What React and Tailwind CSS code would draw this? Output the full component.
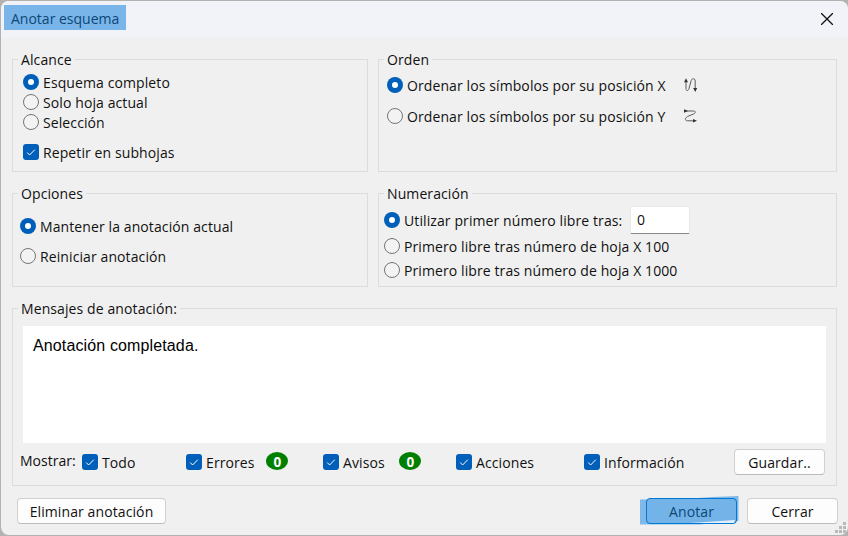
import React from "react";

function Group({ title, className, bodyClassName, children }) {
  return (
    <fieldset className={`min-w-0 border border-[#dcdcdc] ${className}`}>
      <legend className="ml-[5px] h-[21px] px-[3px] leading-[21px]">{title}</legend>
      <div className={`flow-root ${bodyClassName}`}>{children}</div>
    </fieldset>
  );
}

function Radio({ label, checked, className = "" }) {
  return (
    <div className={`flex items-center whitespace-nowrap ${className}`}>
      {checked ? (
        <span className="mr-1 flex size-4 shrink-0 items-center justify-center rounded-full bg-[#005fb8]">
          <span className="size-[6px] rounded-full bg-white" />
        </span>
      ) : (
        <span className="mr-1 size-4 shrink-0 rounded-full border border-[#757575] bg-[#f3f3f3]" />
      )}
      <span className="pt-px leading-[19px]">{label}</span>
    </div>
  );
}

function Check({ label, className = "" }) {
  return (
    <div className={`flex shrink-0 items-center whitespace-nowrap ${className}`}>
      <span className="mr-1 flex size-4 shrink-0 items-center justify-center rounded-[3px] bg-[#005fb8]">
        <svg width="16" height="16" viewBox="0 0 16 16" fill="none" stroke="#fff" strokeWidth="1">
          <path d="M4.2 8.5 6.6 11l5.2-5.3" />
        </svg>
      </span>
      <span className="pt-px leading-[19px]">{label}</span>
    </div>
  );
}

function Badge() {
  return (
    <span className="mr-[35px] mb-[2px] flex h-[18px] w-[22px] shrink-0 items-center justify-center rounded-[50%] bg-[#008000] text-[15px] leading-[18px] font-bold text-white">
      <span className="scale-x-90">0</span>
    </span>
  );
}

function Button({ className, children }) {
  return (
    <button className={`h-[26px] shrink-0 rounded-[4px] border border-[#d0d0d0] border-b-[#bcbcbc] bg-[#fdfdfd] pt-px leading-[23px] ${className}`}>
      {children}
    </button>
  );
}

function OrderIcon({ horizontal }) {
  return (
    <svg width="16" height="16" viewBox="0 0 16 16" className="ml-[17px] shrink-0" fill="none" stroke="#5a5a5a" strokeWidth="1">
      {horizontal ? (
        <>
          <path d="M2 3h8.500c2.500 0 2.500 2 0 3L4.500 8.500C1.500 10.500 2 12.800 4.500 12.800h7" />
          <path d="M1 1.200v3.600L5 3zM10 11v3.600l4-1.800z" fill="#333" stroke="none" />
        </>
      ) : (
        <>
          <path d="M3 3v8.500c0 2.800 2.200 2.800 3 0l2.200-8c.8-2.500 4-2.500 4 .5v8" />
          <path d="M1 5.200h4L3 1.200zM10.200 11h4l-2 4z" fill="#333" stroke="none" />
        </>
      )}
    </svg>
  );
}

export default function App() {
  return (
    <div className="h-[536px] w-[848px] overflow-hidden bg-[#b4b2b1] pt-px pl-px font-['Open_Sans','Noto_Sans',sans-serif] text-[14px] leading-5 tracking-[0.1px] text-[#111]">
      <div className="relative flex h-[534px] w-[847px] flex-col overflow-hidden rounded-[8px] bg-[#f0f0f0]">
        <header className="flex h-9 shrink-0 items-center justify-between bg-[#f2f3f9] pr-[15px] pl-[3px]">
          <div className="mb-[3px] h-[25px] w-[122px] bg-[#79b5e9] pl-[7px] leading-[28px] tracking-normal text-[#0c4777]">
            Anotar esquema
          </div>
          <svg width="12" height="12" viewBox="0 0 12 12" stroke="#111" strokeWidth="1.3">
            <path d="M0 0 12 12M12 0 0 12" />
          </svg>
        </header>

        <main className="px-[11px] pt-3">
          <div className="flex gap-[10px]">
            <Group title="Alcance" className="h-[123px] w-[356px]" bodyClassName="pl-[10px] pt-[2px]">
              <Radio checked label="Esquema completo" />
              <Radio label="Solo hoja actual" />
              <Radio label="Selección" />
              <Check label="Repetir en subhojas" className="mt-[10px]" />
            </Group>
            <Group title="Orden" className="h-[123px] w-[459px]" bodyClassName="pl-2 pt-[5px]">
              <div className="flex items-center">
                <Radio checked label="Ordenar los símbolos por su posición X" className="w-[279px]" />
                <OrderIcon />
              </div>
              <div className="mt-[11px] flex items-center">
                <Radio label="Ordenar los símbolos por su posición Y" className="w-[279px]" />
                <OrderIcon horizontal />
              </div>
            </Group>
          </div>

          <div className="mt-[11px] flex gap-[10px]">
            <Group title="Opciones" className="h-[104px] w-[356px]" bodyClassName="pl-[7px] pt-3">
              <Radio checked label="Mantener la anotación actual" />
              <Radio label="Reiniciar anotación" className="mt-[10px]" />
            </Group>
            <Group title="Numeración" className="h-[104px] w-[459px]" bodyClassName="pl-[5px]">
              <div className="flex h-[29px] items-center pt-[2px]">
                <Radio checked label="Utilizar primer número libre tras:" className="w-[246px]" />
                <input
                  readOnly
                  value="0"
                  className="h-7 w-[60px] rounded-[2px] border border-[#e8e8e8] border-b-[#868686] bg-white pl-[6px] outline-none"
                />
              </div>
              <Radio label="Primero libre tras número de hoja X 100" className="mt-[3px]" />
              <Radio label="Primero libre tras número de hoja X 1000" className="mt-1" />
            </Group>
          </div>

          <Group title="Mensajes de anotación:" className="mt-[11px] h-[188px] w-[825px]" bodyClassName="px-[10px] pt-[7px]">
            <div className="h-[117px] w-[803px] bg-white pt-[10px] pl-[10px] font-['Liberation_Sans',Arial,sans-serif] text-base leading-5 tracking-[0.13px] text-black">
              Anotación completada.
            </div>
            <div className="-ml-[3px] flex h-[38px] items-center">
              <span className="mb-[2px] w-[62px] shrink-0 tracking-normal">Mostrar:</span>
              <Check label="Todo" className="w-[104px]" />
              <Check label="Errores" className="w-20" />
              <Badge />
              <Check label="Avisos" className="w-[76px]" />
              <Badge />
              <Check label="Acciones" className="w-[128px]" />
              <Check label="Información" className="w-[150px]" />
              <Button className="w-[91px]">Guardar..</Button>
            </div>
          </Group>

          <footer className="mt-3 flex pl-[5px]">
            <Button className="w-[149px]">Eliminar anotación</Button>
            <div className="relative ml-[480px] shrink-0">
              <svg className="absolute -top-[3px] -left-[6px]" width="100" height="32" viewBox="0 0 100 32">
                <path d="M0 4.500 45 4 72 2 98.500 1V26H92L60 29.500H0z" fill="#7fb9e9" />
              </svg>
              <button className="relative block h-[26px] w-[91px] rounded-[4px] border border-[#0078d4] bg-[#73b3e8] pt-px leading-[23px] text-[#0c4777]">
                Anotar
              </button>
              <svg className="absolute bottom-px left-[44px]" width="45" height="3" viewBox="0 0 45 3">
                <path d="M0 3 45 0 44 3z" fill="#e3effa" />
              </svg>
            </div>
            <Button className="ml-[10px] w-[91px]">Cerrar</Button>
          </footer>
        </main>
        <svg className="absolute right-[2px] bottom-[2px]" width="11" height="11" viewBox="0 0 11 11" fill="#b9b9b9">
          <path d="M8 0h3v3H8zM8 4h3v3H8zM8 8h3v3H8zM4 4h3v3H4zM4 8h3v3H4zM0 8h3v3H0z" />
        </svg>
      </div>
    </div>
  );
}
